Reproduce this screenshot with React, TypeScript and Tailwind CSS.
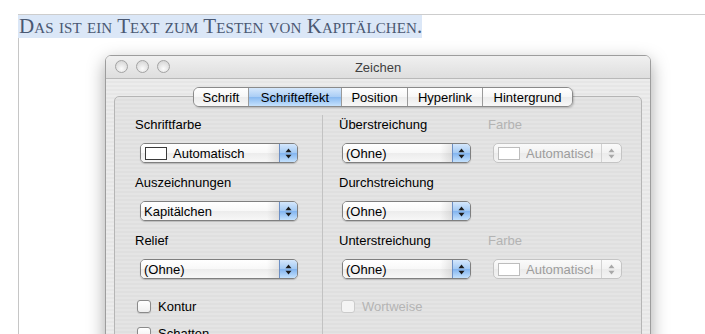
import React from 'react';

const stripes =
  'bg-[repeating-linear-gradient(180deg,#ececec_0px,#ececec_2px,#e6e6e6_2px,#e6e6e6_4px)]';

function Arrows({ disabled }: { disabled?: boolean }) {
  return (
    <svg width="7" height="11" viewBox="0 0 7 11" className={disabled ? 'fill-[#a8a8a8]' : 'fill-[#1c1c1c]'}>
      <path d="M3.5 0.5 L6.5 4.2 L0.5 4.2 Z" />
      <path d="M0.5 6.8 L6.5 6.8 L3.5 10.5 Z" />
    </svg>
  );
}

function Swatch({ disabled }: { disabled?: boolean }) {
  return (
    <span
      className={`ml-[4px] mr-[6px] h-[13px] w-[22px] shrink-0 border bg-white ${
        disabled ? 'border-[#bdbdbd] bg-[#f7f7f7]' : 'border-[#3a3a3a]'
      }`}
    />
  );
}

function Popup({ w, label, swatch }: { w: string; label: string; swatch?: boolean }) {
  return (
    <div
      className={`${w} flex h-[20px] overflow-hidden rounded-[5px] border border-[#7f7f7f] shadow-[0_1px_1px_rgba(0,0,0,0.18)]`}
    >
      <div className="flex min-w-0 flex-1 items-center bg-[linear-gradient(#ffffff,#f8f8f8_50%,#ececec_50%,#f7f7f7)]">
        {swatch ? <Swatch /> : <span className="w-[3px]" />}
        <span className="whitespace-nowrap text-[13px] leading-none text-black">{label}</span>
        <span className="ml-auto h-full w-[12px] bg-[linear-gradient(90deg,rgba(0,0,0,0),rgba(0,0,0,0.09))]" />
      </div>
      <div className="flex w-[18px] items-center justify-center border-l border-[#6c8fc4] bg-[linear-gradient(#d4e7fc,#a2c9f4_50%,#80b3ef_50%,#c4e1fd)]">
        <Arrows />
      </div>
    </div>
  );
}

function DisabledPopup() {
  return (
    <div className="flex h-[20px] w-[129px] overflow-hidden rounded-[5px] border border-[#c4c4c4] bg-[linear-gradient(#fafafa,#f2f2f2_50%,#ebebeb_50%,#f3f3f3)]">
      <div className="flex min-w-0 flex-1 items-center pr-[8px]">
        <Swatch disabled />
        <span className="min-w-0 overflow-hidden whitespace-nowrap text-[13px] leading-none text-[#9d9d9d]">
          Automatisch
        </span>
      </div>
      <div className="flex w-[20px] items-center justify-center border-l border-[#d2d2d2]">
        <Arrows disabled />
      </div>
    </div>
  );
}

function Check({ label, disabled }: { label: string; disabled?: boolean }) {
  return (
    <div className="ml-[2px] flex h-[16px] items-center gap-[7px]">
      <span
        className={`h-[13px] w-[14px] rounded-[3px] border ${
          disabled
            ? 'border-[#cbcbcb] bg-[#f4f4f4]'
            : 'border-[#8a8a8a] bg-[linear-gradient(#ffffff,#efefef)] shadow-[0_1px_1px_rgba(0,0,0,0.12)]'
        }`}
      />
      <span className={`text-[13px] leading-none ${disabled ? 'text-[#b4b4b4]' : 'text-black'}`}>{label}</span>
    </div>
  );
}

function Label({ children, muted }: { children: React.ReactNode; muted?: boolean }) {
  return (
    <div className={`h-[16px] text-[13px] leading-[16px] ${muted ? 'text-[#b3b3b3]' : 'text-black'}`}>{children}</div>
  );
}

const tabs = [
  { name: 'Schrift', w: 'w-[54px]' },
  { name: 'Schrifteffekt', w: 'w-[93px]', active: true },
  { name: 'Position', w: 'w-[66px]' },
  { name: 'Hyperlink', w: 'w-[75px]' },
  { name: 'Hintergrund', w: 'w-[90px]' },
];

export default function App() {
  return (
    <div className="h-[334px] w-[705px] overflow-hidden bg-white pl-[18px] pt-[14px] font-['Liberation_Sans',Arial,sans-serif]">
      <div className="border-t border-[#cdcdcd]">
        <div className="flex h-[23px] w-[404px] items-end whitespace-nowrap bg-[#dbe7f7] pl-[1px] font-['Liberation_Serif',serif] text-[21px] leading-[23px] tracking-[0.08px] text-[#4a5872] [font-variant-caps:small-caps]">
          Das ist ein Text zum Testen von Kapitälchen.
        </div>
        <div className="h-[300px] border-l border-[#c6c6c6] pl-[86px] pt-[17px]">
          <div className="h-[290px] w-[546px] overflow-hidden rounded-t-[6px] border border-[#9d9d9d] shadow-[0_6px_18px_rgba(0,0,0,0.35)]">
            {/* title bar */}
            <div className="relative flex h-[23px] items-center justify-center border-b border-[#b9b9b9] bg-[linear-gradient(#f0f0f0,#dedede)]">
              <div className="absolute left-[9px] top-[4px] flex gap-[8px]">
                {[0, 1, 2].map((i) => (
                  <span
                    key={i}
                    className="h-[13px] w-[13px] rounded-full border border-[#a2a2a2] bg-[radial-gradient(circle_at_50%_70%,#fbfbfb,#dcdcdc_70%,#cfcfcf)]"
                  />
                ))}
              </div>
              <span className="text-[13px] leading-none text-[#3f3f3f]">Zeichen</span>
            </div>
            {/* body */}
            <div className={`h-full px-[8px] pt-[8px] ${stripes}`}>
              <div className="relative z-10 -mb-[11px] flex pl-[79px]">
                <div className="flex h-[20px] overflow-hidden rounded-[6px] border border-[#8a8a8a] shadow-[1px_1px_2px_rgba(0,0,0,0.2)]">
                  {tabs.map((t, i) => (
                    <div
                      key={t.name}
                      className={`${t.w} flex items-center justify-center text-[13px] leading-none text-black ${
                        i > 0 ? 'border-l border-[#9a9a9a]' : ''
                      } ${
                        t.active
                          ? 'bg-[linear-gradient(#d6e8fc,#a9cdf5_50%,#86b8f0_50%,#c6e2fd)]'
                          : 'bg-[linear-gradient(#ffffff,#f6f6f6_50%,#ebebeb_50%,#f8f8f8)]'
                      }`}
                    >
                      {t.name}
                    </div>
                  ))}
                </div>
              </div>
              <div className="h-[260px] rounded-[5px] border border-[#b5b5b5] bg-[repeating-linear-gradient(180deg,#e4e4e4_0px,#e4e4e4_2px,#dfdfdf_2px,#dfdfdf_4px)] pt-[18px]">
                <div className="flex h-full">
                  {/* left column */}
                  <div className="w-[207px] pl-[20px] pt-[2px]">
                    <Label>Schriftfarbe</Label>
                    <div className="ml-[5px] mt-[10px]">
                      <Popup w="w-[158px]" label="Automatisch" swatch />
                    </div>
                    <div className="mt-[12px]">
                      <Label>Auszeichnungen</Label>
                    </div>
                    <div className="ml-[5px] mt-[10px]">
                      <Popup w="w-[158px]" label="Kapitälchen" />
                    </div>
                    <div className="mt-[12px]">
                      <Label>Relief</Label>
                    </div>
                    <div className="ml-[5px] mt-[10px]">
                      <Popup w="w-[158px]" label="(Ohne)" />
                    </div>
                    <div className="mt-[19px]">
                      <Check label="Kontur" />
                    </div>
                    <div className="mt-[11px]">
                      <Check label="Schatten" />
                    </div>
                  </div>
                  {/* right column */}
                  <div className="flex-1 border-l border-[#c2c2c2] pl-[16px] pt-[2px]">
                    <div className="flex">
                      <div className="w-[149px]">
                        <Label>Überstreichung</Label>
                      </div>
                      <Label muted>Farbe</Label>
                    </div>
                    <div className="mt-[10px] flex">
                      <div className="ml-[3px]">
                        <Popup w="w-[129px]" label="(Ohne)" />
                      </div>
                      <div className="ml-[22px]">
                        <DisabledPopup />
                      </div>
                    </div>
                    <div className="mt-[12px]">
                      <Label>Durchstreichung</Label>
                    </div>
                    <div className="ml-[3px] mt-[10px]">
                      <Popup w="w-[129px]" label="(Ohne)" />
                    </div>
                    <div className="mt-[12px] flex">
                      <div className="w-[149px]">
                        <Label>Unterstreichung</Label>
                      </div>
                      <Label muted>Farbe</Label>
                    </div>
                    <div className="mt-[10px] flex">
                      <div className="ml-[3px]">
                        <Popup w="w-[129px]" label="(Ohne)" />
                      </div>
                      <div className="ml-[22px]">
                        <DisabledPopup />
                      </div>
                    </div>
                    <div className="mt-[19px]">
                      <Check label="Wortweise" disabled />
                    </div>
                  </div>
                </div>
              </div>
            </div>
          </div>
        </div>
      </div>
    </div>
  );
}
